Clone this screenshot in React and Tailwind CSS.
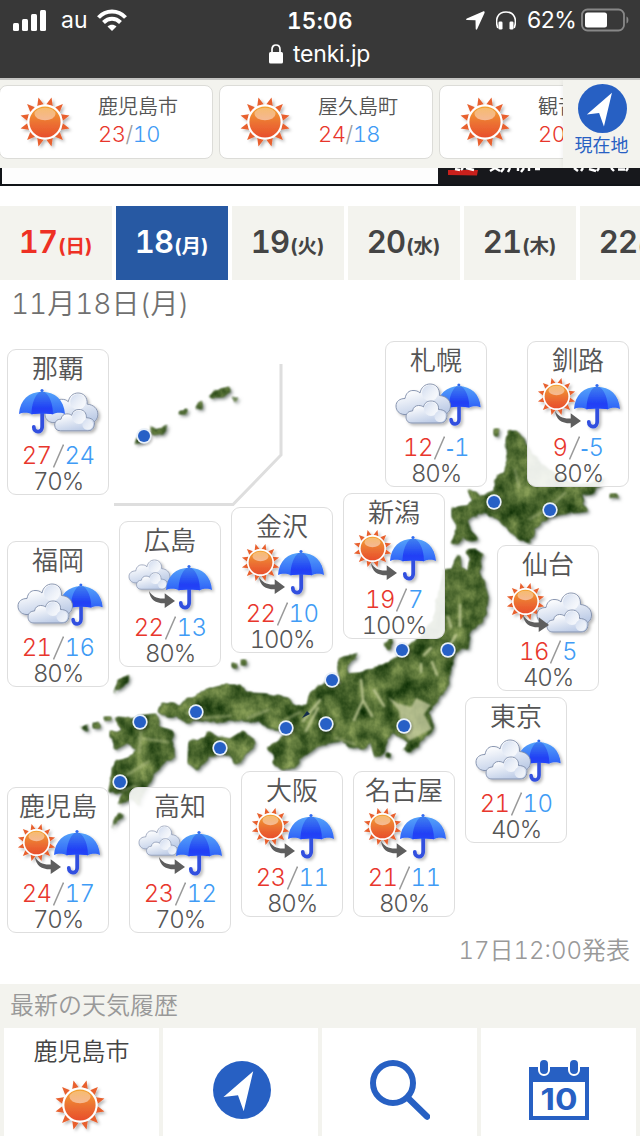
import React from 'react';

const recent = [
  { name: '鹿児島市', high: 23, low: 10 },
  { name: '屋久島町', high: 24, low: 18 },
  { name: '観音寺市', high: 20, low: 11 },
];

const days = [
  { day: 17, week: '日', style: 'bg-[#f3f3ee] text-[#ee3024]' },
  { day: 18, week: '月', style: 'bg-[#2759a3] text-white' },
  { day: 19, week: '火', style: 'bg-[#f3f3ee] text-[#444]' },
  { day: 20, week: '水', style: 'bg-[#f3f3ee] text-[#444]' },
  { day: 21, week: '木', style: 'bg-[#f3f3ee] text-[#444]' },
  { day: 22, week: '金', style: 'bg-[#f3f3ee] text-[#444]' },
];

// x / y are pin positions on the map canvas
const cities = [
  { name: '那覇', icon: 'rain-cloud', high: 27, low: 24, rain: 70, x: 7, y: 27 },
  { name: '札幌', icon: 'cloud-rain', high: 12, low: -1, rain: 80, x: 385, y: 19 },
  { name: '釧路', icon: 'sun-to-rain', high: 9, low: -5, rain: 80, x: 527, y: 19 },
  { name: '福岡', icon: 'cloud-rain', high: 21, low: 16, rain: 80, x: 7, y: 219 },
  { name: '広島', icon: 'cloud-to-rain', high: 22, low: 13, rain: 80, x: 119, y: 199 },
  { name: '金沢', icon: 'sun-to-rain', high: 22, low: 10, rain: 100, x: 231, y: 185 },
  { name: '新潟', icon: 'sun-to-rain', high: 19, low: 7, rain: 100, x: 343, y: 171 },
  { name: '仙台', icon: 'sun-to-cloud', high: 16, low: 5, rain: 40, x: 497, y: 223 },
  { name: '東京', icon: 'cloud-rain', high: 21, low: 10, rain: 40, x: 465, y: 375 },
  { name: '鹿児島', icon: 'sun-to-rain', high: 24, low: 17, rain: 70, x: 7, y: 465 },
  { name: '高知', icon: 'cloud-to-rain', high: 23, low: 12, rain: 70, x: 129, y: 465 },
  { name: '大阪', icon: 'sun-to-rain', high: 23, low: 11, rain: 80, x: 241, y: 449 },
  { name: '名古屋', icon: 'sun-to-rain', high: 21, low: 11, rain: 80, x: 353, y: 449 },
];

const dots = [
  [144, 436], [494, 502], [550, 510], [402, 650], [448, 650], [332, 680], [326, 724],
  [404, 726], [286, 728], [196, 712], [220, 748], [140, 722], [120, 782],
];

const rays = Array.from({ length: 12 }, (_, i) => 15 + i * 30);

function Defs() {
  return (
    <svg className="absolute h-0 w-0" aria-hidden="true">
      <defs>
        <linearGradient id="sunFill" x1="0" y1="0" x2="0" y2="1">
          <stop offset="0" stopColor="#f3a431" />
          <stop offset="0.5" stopColor="#ec7432" />
          <stop offset="1" stopColor="#e84e2c" />
        </linearGradient>
        <linearGradient id="sunGloss" x1="0" y1="0" x2="0" y2="1">
          <stop offset="0" stopColor="#fff" stopOpacity="0.3" />
          <stop offset="1" stopColor="#fff" stopOpacity="0.48" />
        </linearGradient>
        <linearGradient id="cloudFill" x1="0.2" y1="0" x2="0.6" y2="1">
          <stop offset="0.2" stopColor="#fff" />
          <stop offset="1" stopColor="#bccbe6" />
        </linearGradient>
        <linearGradient id="puff" x1="0.1" y1="0.1" x2="0.9" y2="0.9">
          <stop offset="0" stopColor="#d4def0" />
          <stop offset="1" stopColor="#fff" stopOpacity="0.8" />
        </linearGradient>
        <linearGradient id="umbrellaFill" x1="0" y1="0" x2="0" y2="1">
          <stop offset="0" stopColor="#55a3fa" />
          <stop offset="1" stopColor="#2e61f7" />
        </linearGradient>
        <linearGradient id="umbrellaMid" x1="0" y1="0" x2="0" y2="1">
          <stop offset="0" stopColor="#3f80f0" />
          <stop offset="0.75" stopColor="#203ff5" />
          <stop offset="1" stopColor="#2546f8" />
        </linearGradient>
        <filter id="drop" x="-20%" y="-20%" width="150%" height="150%">
          <feDropShadow dx="2" dy="2" stdDeviation="1.5" floodOpacity="0.28" />
        </filter>
        <filter id="terrain" x="-5%" y="-5%" width="110%" height="110%" colorInterpolationFilters="sRGB">
          <feTurbulence type="fractalNoise" baseFrequency="0.13" numOctaves="2" seed="4" result="edge" />
          <feDisplacementMap in="SourceGraphic" in2="edge" scale="5" xChannelSelector="R" yChannelSelector="G" result="rough" />
          <feGaussianBlur in="rough" stdDeviation="0.9" result="land" />
          <feTurbulence type="fractalNoise" baseFrequency="0.06 0.05" numOctaves="4" seed="23" result="noise" />
          <feColorMatrix
            in="noise"
            values="0.75 0 0 0 -0.05
                    0.68 0 0 0 0.09
                    0.5 0 0 0 -0.05
                    0 0 0 0 0.9"
            result="grass"
          />
          <feGaussianBlur in="grass" stdDeviation="0.7" result="green" />
          <feComposite in="green" in2="land" operator="in" result="grain" />
          <feMerge result="map">
            <feMergeNode in="land" />
            <feMergeNode in="grain" />
          </feMerge>
          <feDropShadow in="map" dx="2" dy="2" stdDeviation="1.6" floodColor="#1e2b28" floodOpacity="0.5" />
        </filter>
        <filter id="soft"><feGaussianBlur stdDeviation="1" /></filter>
      </defs>
    </svg>
  );
}

function SunShape() {
  return (
    <g>
      {rays.map((a) => (
        <path key={a} d="M-3.3 -17.5 L0 -25.3 L3.3 -17.5 Z" fill="#e8602d" transform={`rotate(${a})`} />
      ))}
      <circle r="17.6" fill="#fff" />
      <circle r="15.6" fill="url(#sunFill)" />
      <ellipse cy="-8" rx="10.5" ry="6.2" fill="url(#sunGloss)" />
    </g>
  );
}

function CloudShape() {
  return (
    <g stroke="#7d8ba8" strokeWidth="0.9" strokeLinejoin="round">
      <path
        d="M8 30.500 C3 30 0 26.500 0 22 C0 17.500 3.500 14.500 9 14.500 C10 9 13 6.500 17 6.500 C20 6.500 22 7 24 9 C25 3.500 29 0 34 0 C40 0 44 4.500 43.500 11.500 C50 12 54.500 16 54.500 22 C54.500 27 51 31 46 31 Z"
        fill="url(#cloudFill)"
      />
      <circle cx="34" cy="9" r="8" fill="url(#puff)" stroke="none" />
      <path
        d="M16 39 C12 39 10 36.500 10 33 C10 29.500 12.500 27 16.500 27 C17 23.500 19.500 21.500 22.500 21.500 C25 21.500 26 22 27.500 23 C28.500 19 31 17 35 17 C39.500 17 43 20 42.500 25.500 C48 25.500 51.500 28.500 51 32 C50.500 37 48 39 44 39 Z"
        fill="url(#cloudFill)"
      />
      <circle cx="35" cy="25" r="7" fill="url(#puff)" stroke="none" />
      <circle cx="44" cy="32.500" r="5.500" fill="url(#puff)" stroke="none" />
    </g>
  );
}

function UmbrellaShape() {
  return (
    <g>
      <path d="M23.200 22 V37.500 C23.200 44.500 14.800 44 14.800 38" fill="none" stroke="#3050df" strokeWidth="3.800" strokeLinecap="round" />
      <circle cx="23" cy="1.600" r="1.600" fill="#326bef" />
      <path
        d="M0 25 C1 11 10 2.800 23 2.800 C36 2.800 45 11 46 25 C43 23.600 38 23.200 34 25.300 C29 24.200 18 24.200 12.500 25.300 C9 23.200 3 23.600 0 25 Z"
        fill="url(#umbrellaFill)"
      />
      <path d="M12.500 25.300 C12.500 15 16 6 20.500 2.900 H25.500 C30.500 6 34 15 34 25.300 C29 24.300 18 24.300 12.500 25.300 Z" fill="url(#umbrellaMid)" />
    </g>
  );
}

function ArrowShape() {
  return (
    <path
      d="M0 0 C3.500 5.500 8 8 15.700 7.500 V2.300 L26 10 L15.700 17 V12.300 C7 12.500 1 9 0 0 Z"
      fill="#5e5e5e"
    />
  );
}

function WeatherIcon({ type }) {
  return (
    <svg viewBox="0 35 102 60" className="block h-[60px] w-[102px] shrink-0">
      <g filter="url(#drop)">
        {type === 'sun-to-rain' && (
          <>
            <g transform="translate(29.500 55.500) scale(.76)"><SunShape /></g>
            <g transform="translate(47 43)"><UmbrellaShape /></g>
          </>
        )}
        {type === 'cloud-to-rain' && (
          <>
            <g transform="translate(10 39) scale(.75)"><CloudShape /></g>
            <g transform="translate(47 44)"><UmbrellaShape /></g>
          </>
        )}
        {type === 'cloud-rain' && (
          <>
            <g transform="translate(52 42.500) scale(.95)"><UmbrellaShape /></g>
            <g transform="translate(11 43)"><CloudShape /></g>
          </>
        )}
        {type === 'rain-cloud' && (
          <>
            <g transform="translate(38 44) scale(.97)"><CloudShape /></g>
            <g transform="translate(12 40)"><UmbrellaShape /></g>
          </>
        )}
        {type === 'sun-to-cloud' && (
          <>
            <g transform="translate(28.500 56.500) scale(.76)"><SunShape /></g>
            <g transform="translate(40 48)"><CloudShape /></g>
          </>
        )}
      </g>
      {type === 'sun-to-rain' && <g transform="translate(28 70)"><ArrowShape /></g>}
      {type === 'cloud-to-rain' && <g transform="translate(30 70)"><ArrowShape /></g>}
      {type === 'sun-to-cloud' && <g transform="translate(26 70)"><ArrowShape /></g>}
    </svg>
  );
}

function SunIcon({ className = '' }) {
  return (
    <svg viewBox="-30 -30 60 60" className={`block h-[60px] w-[60px] shrink-0 ${className}`}>
      <g filter="url(#drop)"><SunShape /></g>
    </svg>
  );
}

function CompassIcon({ className }) {
  return (
    <svg viewBox="0 0 58 58" className={className}>
      <circle cx="29" cy="29" r="29" fill="#2760c3" />
      <path d="M40.200 10.300 L10.500 36 L25 34.300 L30.700 50.300 Z" fill="#fff" />
    </svg>
  );
}

function StatusBar() {
  return (
    <header className="h-20 shrink-0 border-b-2 border-[#c4c4c2] bg-[#383838] text-white">
      <div className="flex h-10 items-center">
        <div className="flex w-[287px] items-center pl-[13px]">
          <svg viewBox="0 0 33 21" className="h-[21px] w-[33px]" fill="#fff">
            <rect y="13" width="6" height="8" rx="1.5" />
            <rect x="9" y="9" width="6" height="12" rx="1.5" />
            <rect x="18" y="4" width="6" height="17" rx="1.5" />
            <rect x="27" width="6" height="21" rx="1.5" />
          </svg>
          <span className="ml-[15px] w-[28px] text-[23px] leading-none">au</span>
          <svg viewBox="0 0 30 22" className="ml-[8px] h-[22px] w-[30px]" fill="none" stroke="#fff" strokeWidth="4">
            <path d="M1.500 8.500 C9 0.500 21 0.500 28.500 8.500" />
            <path d="M6.500 13.500 C11.500 8.500 18.500 8.500 23.500 13.500" />
            <path d="M15 22 L10.500 17.500 C13 15 17 15 19.500 17.500 Z" fill="#fff" stroke="none" />
          </svg>
        </div>
        <span className="w-[179px] pt-[2px] text-[22.500px] font-semibold tabular-nums tracking-[0.3px]">15:06</span>
        <svg viewBox="0 0 19 19" className="h-[19px] w-[19px]" fill="#fff">
          <path d="M17 0.500 L0.800 7.600 C-0.200 8.200 0 9 1 9 L9.500 9.200 L9.700 17.800 C9.800 19 10.600 19.200 11.200 18 L18.500 2 C19 .8 18 0 17 .5Z" />
        </svg>
        <svg viewBox="0 0 20 19" className="ml-[11px] h-[19px] w-[20px]" fill="#fff">
          <path d="M1.800 17 C-1.500 8 2 1 10 1 C18 1 21.500 8 18.200 17" fill="none" stroke="#fff" strokeWidth="1.6" />
          <rect x="2.500" y="10.500" width="4" height="8" rx="1.300" />
          <rect x="13.500" y="10.500" width="4" height="8" rx="1.300" />
        </svg>
        <span className="ml-[11px] w-[54px] whitespace-nowrap pt-[1px] text-[23px] tracking-[-0.5px]">62%</span>
        <svg viewBox="0 0 48 24" className="h-[24px] w-[48px]">
          <rect x="1" y="1.500" width="42" height="21" rx="5.500" fill="none" stroke="#888" strokeWidth="1.800" />
          <rect x="4" y="4.500" width="22" height="15" rx="2.500" fill="#fff" />
          <path d="M45.500 8.500 C48 9 48 15 45.500 15.500Z" fill="#888" />
        </svg>
      </div>
      <div className="flex h-7 items-center pl-[269px]">
        <svg viewBox="0 0 14 20" className="h-[20px] w-[14px]" fill="none">
          <rect y="8" width="14" height="11.500" rx="1.500" fill="#fff" />
          <path d="M3 8.500 V5.500 C3 -0.500 11 -0.500 11 5.500 V8.500" stroke="#fff" strokeWidth="1.700" />
        </svg>
        <span className="ml-[10px] text-[23px] leading-none tracking-[-0.2px]">tenki.jp</span>
      </div>
    </header>
  );
}

function RecentStrip() {
  return (
    <div className="relative flex h-[88px] shrink-0 gap-[6px] overflow-hidden bg-[#f3f3ee] pt-[5px]">
      {recent.map((r) => (
        <div
          key={r.name}
          className="-ml-px mr-px flex h-[74px] w-[214px] shrink-0 items-center rounded-lg border border-[#dcdcd8] bg-white pl-[15px]"
        >
          <SunIcon />
          <div className="-mt-[3px] ml-[23px] flex flex-col text-[#555]">
            <span className="h-[28px] whitespace-nowrap text-[20px] font-[350] leading-[28px]">{r.name}</span>
            <span className="h-[27px] text-[22px] font-[350] leading-[27px] tabular-nums tracking-[-0.5px]">
              <span className="text-[#e8362c]">{r.high}</span>
              <span className="text-[#999]">/</span>
              <span className="text-[#409bf5]">{r.low}</span>
            </span>
          </div>
        </div>
      ))}
      <div className="absolute right-0 top-0 flex h-full w-[77px] flex-col items-center bg-[#f3f3ee] pt-[4px] shadow-[-2px_0_3px_rgba(0,0,0,.04)]">
        <CompassIcon className="ml-[2px] block h-[49px] w-[49px]" />
        <span className="pt-px text-[18px] leading-[24px] text-[#2760c3]">現在地</span>
      </div>
    </div>
  );
}

function Banner() {
  return (
    <div className="flex h-[18px] shrink-0 border-b-2 border-l-2 border-[#111418]">
      <div className="w-[436px] bg-[#fdfdfd]" />
      <svg viewBox="0 0 202 16" className="block h-[16px] w-[202px] bg-[#17181c]">
        <path d="M10 2 H40 L39 7.500 L10 7Z" fill="#c9201c" />
        <g fill="none" stroke="#fff" strokeWidth="2.400">
          <path d="M17 1 l5 1 M25 0 l-2 2 M28 0 l8 2 M52 3 l5 -3 M57 0 l5 3 M66 0 l-3 4 M72 0 l-2 4 M80 0 v3 M86 0 l-3 4 M91 0 v3 M97 1 h5" />
          <path d="M136 0 l4 3 M145 0 l-2 3 M151 1 l7 2 M161 0 l-2 3 M173 0 l3 3 M180 1.500 h7 M190 0 l-2 3" />
        </g>
      </svg>
    </div>
  );
}

function DayTabs() {
  return (
    <div className="mt-5 flex h-[74px] shrink-0 gap-1 overflow-hidden">
      {days.map((d) => (
        <div key={d.day} className={`flex w-28 shrink-0 items-baseline justify-center pr-px pt-[17px] ${d.style}`}>
          <span className="text-[31px] font-semibold leading-[38px] tabular-nums tracking-[-0.8px]">{d.day}</span>
          <span className="ml-[1px] text-[19.500px] font-bold">({d.week})</span>
        </div>
      ))}
    </div>
  );
}

function JapanMap() {
  return (
    <svg viewBox="0 322 640 520" className="block h-[520px] w-[640px]">
      <path d="M281 364 V455 L233 504.500 H114" fill="none" stroke="#dedede" strokeWidth="3" />
      <g filter="url(#terrain)" fill="#37561f">
        {/* Hokkaido */}
        <path d="M508 432 L516 431 L523 438 L527 448 L540 463 L555 475 L573 484 L590 484 L607 478 L596 488 L582 494 L583 503 L587 511 L572 513 L556 515 L543 521 L535 529 L529 543 L516 537 L505 525 L494 517 L483 513 L474 516 L467 521 L473 532 L478 540 L470 541 L463 536 L458 545 L451 543 L456 534 L457 525 L452 517 L452 508 L464 506 L472 501 L468 490 L475 491 L480 497 L487 493 L494 491 L495 478 L503 473 L508 458 L506 440 Z" />
        {/* Honshu */}
        <path d="M456 557 L460 556 L461 568 L468 570 L470 560 L466 551 L475 550 L483 554 L480 565 L479 573 L485 585 L488 598 L486 614 L481 624 L471 629 L468 648 L462 647 L455 652 L451 667 L449 682 L444 691 L438 699 L429 713 L434 729 L427 735 L419 744 L409 752 L403 750 L409 742 L403 737 L392 733 L387 740 L384 753 L375 758 L371 742 L361 749 L348 745 L340 741 L327 743 L315 748 L302 758 L292 768 L281 770 L274 763 L273 752 L267 748 L281 740 L285 730 L275 730 L260 722 L233 720 L220 722 L203 720 L187 722 L177 717 L167 717 L159 712 L162 702 L177 705 L193 697 L210 688 L222 685 L240 685 L247 693 L267 694 L287 698 L294 706 L307 705 L310 693 L320 685 L333 684 L341 683 L337 664 L342 656 L357 654 L352 661 L346 667 L348 674 L360 673 L383 665 L397 657 L413 643 L422 636 L433 620 L437 600 L443 570 L452 569 Z" />
        {/* Shikoku */}
        <path d="M189 741 L203 739 L207 731 L217 737 L230 739 L243 731 L254 740 L253 750 L244 755 L237 765 L230 755 L217 753 L209 758 L197 770 L188 762 Z" />
        {/* Kyushu */}
        <path d="M115 718 L128 719 L137 716 L156 714 L159 727 L173 731 L174 755 L164 764 L154 774 L145 790 L140 804 L131 798 L118 804 L124 793 L109 792 L112 773 L115 762 L130 757 L137 749 L128 743 L115 749 L112 736 L121 729 Z" />
        {/* outlying islands */}
        <path d="M114 692 L118 681 L129 674 L128 682 Z M80 728 L87 725 L88 731 Z M94 723 h5 v5 h-5z M105 717 h7 v4 h-7z M110 732 h6 v5 h-6z M232 664 h5 v4 h-5z M241 660 h5 v5 h-5z M384 645 L392 636 L390 650 Z M111 827 L119 813 L124 816 Z M387 754 h4 v4 h-4z M494 429 h5 v7 h-5z M584 495 L597 486 L593 494Z M609 495 h8 v3 h-8z" />
        <path d="M149 426 L157 430 L168 425 L164 433 L153 435 Z M178 410 h8 v4 h-8z M195 408 L202 400 L202 409 Z M208 398 L216 390 L230 387 L231 391 L220 398Z M137 438 l7 3 l-9 3z M232 397 l6 1 l-3 3z" />
      </g>
      <g filter="url(#soft)" fill="none" stroke="#c8d09c" strokeWidth="2.500" strokeLinecap="round" opacity="0.85">
        <path d="M361 680 L363 700 L354 720 M363 700 L372 716 M374 690 L384 706 M421 664 V672 M432 662 L437 675 M448 617 L451 627 M460 605 V626 M456 635 L447 650 M431 648 L424 655 M320 700 L303 721 M318 708 L306 731" />
        <path d="M139 738 L168 742 M141 732 L139 752 M565 493 L552 505 M515 470 L519 487" strokeWidth="3" opacity=".45" />
        <path d="M542 512 L530 519 M336 738 L354 744 M187 713 L203 718 L230 716 M248 718 L268 710 M282 722 L300 712 M127 775 L148 762 M123 790 L136 786" strokeWidth="3" opacity=".45" />
      </g>
      {/* Kanto plain */}
      <path d="M388 697 L397 703 L411 707 L416 698 L431 705 L424 714 L432 729 L409 741 L401 727 L399 711Z" fill="#cdd2a6" opacity=".75" filter="url(#soft)" />
      <path d="M302 718 L307 711 L310 714Z" fill="#132c4d" />
      {dots.map(([x, y]) => (
        <g key={`${x}-${y}`}>
          <circle cx={x + 1} cy={y + 1.500} r="8" fill="#222" opacity=".25" filter="url(#soft)" />
          <circle cx={x} cy={y} r="7.700" fill="#e8f0fa" />
          <circle cx={x} cy={y} r="6" fill="#2760c6" />
        </g>
      ))}
    </svg>
  );
}

function CityCard({ city }) {
  return (
    <div
      className="absolute flex h-[146px] w-[102px] flex-col items-center overflow-hidden rounded-[9px] border border-[#dedede] bg-white/90 text-[#555]"
      style={{ left: city.x, top: city.y }}
    >
      <span className="h-[34px] whitespace-nowrap text-[26px] font-[350] leading-[37px]">{city.name}</span>
      <WeatherIcon type={city.icon} />
      <span className="flex h-[24px] items-center whitespace-nowrap text-[24px] font-[350] leading-[24px] tabular-nums tracking-[-0.6px]">
        <span className="text-[#e8362c]">{city.high}</span>
        <svg viewBox="0 0 11 24" className="mx-px h-[24px] w-[11px]" stroke="#999" strokeWidth="1.500">
          <path d="M0.500 23.500 L10.500 0.500" />
        </svg>
        <span className="flex text-[#409bf5]">
          {city.low < 0 && <span className="w-[8px] font-['Liberation_Sans']">-</span>}
          {Math.abs(city.low)}
        </span>
      </span>
      <span className="h-[26px] text-[24px] font-[350] leading-[27px] tabular-nums tracking-[-1.100px]">{city.rain}%</span>
    </div>
  );
}

function History() {
  return (
    <section className="h-[152px] shrink-0 bg-[#f3f3ee]">
      <h2 className="h-11 pl-[10px] text-[24px] font-[350] leading-[43px] text-[#999]">最新の天気履歴</h2>
      <div className="grid h-[108px] grid-cols-4 gap-1 px-1">
        <div className="flex flex-col items-center bg-white">
          <span className="h-[47px] text-[24px] font-[350] leading-[47px] text-[#444]">鹿児島市</span>
          <SunIcon className="mr-[3px]" />
        </div>
        <div className="flex justify-center bg-white pt-[33px]">
          <CompassIcon className="ml-[2px] block h-[58px] w-[58px]" />
        </div>
        <div className="flex justify-center bg-white pt-[32px]">
          <svg viewBox="0 0 60 60" className="h-[60px] w-[60px]" fill="none" stroke="#2760c3">
            <circle cx="23" cy="23" r="20" strokeWidth="6" />
            <path d="M38 38 L57 56.500" strokeWidth="6.500" strokeLinecap="round" />
          </svg>
        </div>
        <div className="flex justify-center bg-white pt-[32px]">
          <svg viewBox="0 0 60 60" className="h-[60px] w-[60px]">
            <path d="M0 7 H60 V60 H0Z" fill="#2760c3" />
            <rect x="4" y="22" width="52" height="34" fill="#fff" />
            <rect x="10" y="-1" width="10" height="16" rx="5" fill="#2760c3" stroke="#fff" strokeWidth="2" />
            <rect x="40" y="-1" width="10" height="16" rx="5" fill="#2760c3" stroke="#fff" strokeWidth="2" />
            <text x="30" y="50" textAnchor="middle" textLength="37" lengthAdjust="spacingAndGlyphs" fontFamily="Inter" fontWeight="700" fontSize="30" fill="#2760c3">10</text>
          </svg>
        </div>
      </div>
    </section>
  );
}

export default function App() {
  return (
    <div className="flex h-[1136px] w-[640px] flex-col overflow-hidden bg-white font-['Inter','Noto_Sans_CJK_JP',sans-serif]">
      <Defs />
      <StatusBar />
      <RecentStrip />
      <Banner />
      <DayTabs />
      <h1 className="h-[42px] shrink-0 pl-[11px] text-[28px] font-[350] leading-[49px] tabular-nums text-[#707070]">
        11月18日(月)
      </h1>
      <div className="relative h-[612px] shrink-0">
        <JapanMap />
        {cities.map((c) => (
          <CityCard key={c.name} city={c} />
        ))}
      </div>
      <p className="h-[50px] shrink-0 pr-[10px] text-right text-[24px] font-[350] leading-[34px] tabular-nums text-[#999]">
        17日12:00発表
      </p>
      <History />
    </div>
  );
}
